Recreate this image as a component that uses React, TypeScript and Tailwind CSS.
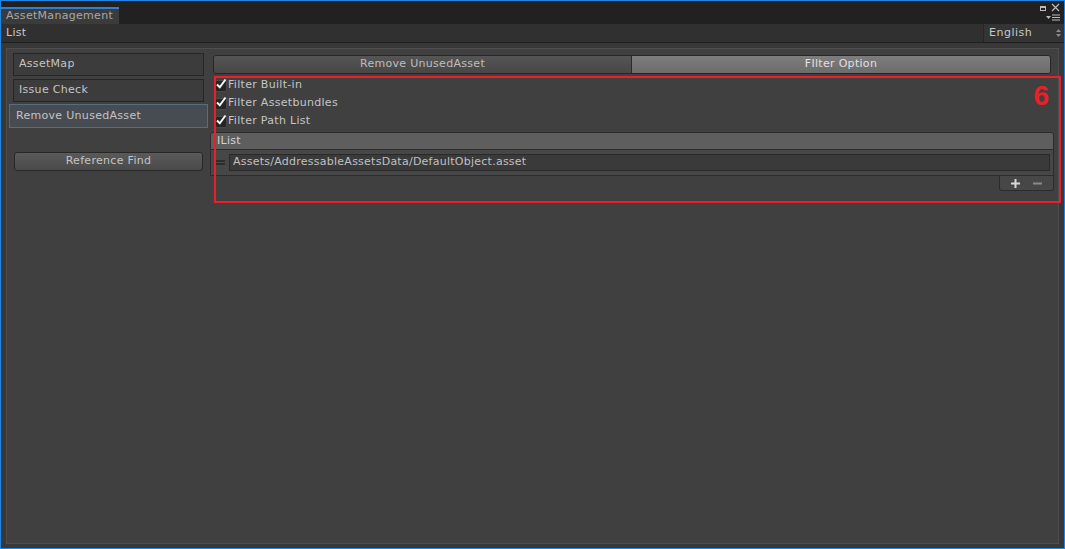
import React from 'react';

const font = { fontFamily: '"DejaVu Sans", Verdana, sans-serif' };

const Check = () => (
    <span className="relative w-[12px] h-[12px] mt-[2px] rounded-[2px] bg-[#252525] border border-[#4a4a4a] shrink-0">
        <svg width="12" height="12" viewBox="0 0 12 12" className="absolute left-[-1px] top-[-3px]">
            <path d="M2 6.5 L4.8 9.3 L10.5 1.5" stroke="#f4f4f4" strokeWidth="2" fill="none" />
        </svg>
    </span>
);

const ToggleRow: React.FC<{ label: string }> = ({ label }) => (
    <div className="flex items-center h-[18px] gap-[1px] pl-[5px] text-[11px] text-[#c4c4c4] tracking-[0.3px]">
        <Check />
        <span>{label}</span>
    </div>
);

const SideButton: React.FC<{ label: string; active?: boolean }> = ({ label, active }) =>
    active ? (
        <div className="h-[24px] -mt-[1px] mx-[2px] flex items-center px-[6px] bg-[#474b52] border border-[#5a6a80] text-[11px] text-[#c4c4c4] tracking-[0.3px]">
            {label}
        </div>
    ) : (
        <div className="h-[23px] mx-[6px] flex items-center px-[5px] bg-[#3c3c3c] border border-[#262626] text-[11px] text-[#c4c4c4] tracking-[0.3px]">
            {label}
        </div>
    );

export default function App() {
    return (
        <div className="w-[1065px] h-[549px] border border-[#1b87e6] bg-[#383838] flex flex-col overflow-hidden" style={font}>
            {/* tab strip */}
            <div className="h-[23px] bg-[#212121] flex items-end relative shrink-0">
                <div className="w-[118px] h-[17px] bg-[#3b3b3b] border-t-2 border-[#2f7fd4] flex items-center pl-[5px] text-[11px] text-[#a8a8a8] tracking-[0.3px]">
                    AssetManagement
                </div>
                <div className="absolute right-[4px] top-[2px] flex items-start gap-[5px]">
                    <span className="mt-[3px] w-[6px] h-[5px] border border-[#bbb] border-t-2" />
                    <svg width="9" height="9" viewBox="0 0 9 9">
                        <path d="M1 1 L8 8 M8 1 L1 8" stroke="#bbb" strokeWidth="1.2" />
                    </svg>
                </div>
                <div className="absolute right-[4px] top-[13px] flex items-center gap-[1px]">
                    <svg width="5" height="4" viewBox="0 0 5 4"><path d="M0 0 L5 0 L2.5 3 Z" fill="#bbb" /></svg>
                    <svg width="8" height="7" viewBox="0 0 8 7"><path d="M0 1 H8 M0 3.5 H8 M0 6 H8" stroke="#bbb" strokeWidth="1.2" /></svg>
                </div>
            </div>

            {/* toolbar */}
            <div className="h-[19px] bg-[#303030] border-b border-[#1e1e1e] flex items-center shrink-0">
                <span className="pl-[5px] text-[11px] text-[#c8c8c8] tracking-[0.3px] flex-1">List</span>
                <div className="w-[81px] h-full border-l border-[#262626] bg-[#343434] flex items-center justify-between pl-[5px] pr-[3px] text-[11px] text-[#c8c8c8] tracking-[0.5px]">
                    English
                    <svg width="5" height="8" viewBox="0 0 5 8"><path d="M0 3 L2.5 0 L5 3 Z M0 5 L2.5 8 L5 5 Z" fill="#8a8a8a" /></svg>
                </div>
            </div>

            {/* main */}
            <div className="flex-1 px-[5px] pt-[5px] pb-[4px] flex">
                <div className="flex-1 border border-[#4e4e4e] bg-[#404040] flex">
                    {/* left column */}
                    <div className="w-[203px] pt-[4px] flex flex-col gap-[3px]">
                        <SideButton label="AssetMap" />
                        <SideButton label="Issue Check" />
                        <SideButton label="Remove UnusedAsset" active />
                        <div className="mt-[21px] mx-[7px] h-[19px] rounded-[3px] bg-gradient-to-b from-[#5a5a5a] to-[#4a4a4a] border border-[#272727] flex items-center justify-center text-[11px] text-[#c4c4c4] tracking-[0.3px]">
                            Reference Find
                        </div>
                    </div>

                    {/* right column */}
                    <div className="relative flex-1 pt-[6px] flex flex-col">
                        <div className="ml-[3px] mr-[7px] h-[19px] flex rounded-[3px] border border-[#262626] overflow-hidden text-[11px] tracking-[0.3px]">
                            <div className="w-[418px] bg-gradient-to-b from-[#555] to-[#474747] flex items-center justify-center text-[#bdbdbd] border-r border-[#2a2a2a]">
                                Remove UnusedAsset
                            </div>
                            <div className="flex-1 bg-gradient-to-b from-[#7d7d7d] to-[#6c6c6c] flex items-center justify-center text-[#e0e0e0]">
                                FIlter Option
                            </div>
                        </div>

                        <div className="mt-[2px] flex flex-col">
                            <ToggleRow label="Filter Built-in" />
                            <ToggleRow label="Filter Assetbundles" />
                            <ToggleRow label="Filter Path List" />
                        </div>
                        <div className="mt-[2px] mr-[4px] rounded-t-[3px] border border-[#2c2c2c] bg-[#5e5e5e] h-[18px] flex items-center pl-[6px] text-[11px] text-[#d2d2d2] tracking-[0.3px]">
                            IList
                        </div>
                        <div className="mr-[4px] border border-t-0 border-[#2c2c2c] bg-[#474747] h-[26px] flex items-center pl-[5px] pr-[3px] gap-[4px]">
                            <svg width="9" height="5" viewBox="0 0 9 5"><path d="M0 1 H9 M0 4 H9" stroke="#151515" strokeWidth="1.2" /></svg>
                            <div className="flex-1 h-[17px] bg-[#3a3a3a] border border-[#2a2a2a] flex items-center pl-[3px] text-[11px] text-[#c0c0c0] tracking-[0.25px]">
                                Assets/AddressableAssetsData/DefaultObject.asset
                            </div>
                        </div>
                        <div className="flex justify-end mr-[4px]">
                            <div className="w-[55px] h-[15px] bg-[#474747] border border-t-0 border-[#2c2c2c] rounded-b-[3px] flex items-center justify-around px-[4px]">
                                <svg width="9" height="9" viewBox="0 0 9 9"><path d="M4.5 0 V9 M0 4.5 H9" stroke="#d8d8d8" strokeWidth="2" /></svg>
                                <svg width="9" height="9" viewBox="0 0 9 9"><path d="M0 4.5 H9" stroke="#8a8a8a" strokeWidth="2" /></svg>
                            </div>
                        </div>

                        {/* annotation overlay */}
                        <div className="absolute left-[4px] top-[27px] w-[847px] h-[127px] border-2 border-[#e8202a] pointer-events-none">
                            <span className="absolute right-[10px] top-[4px] text-[28px] font-bold leading-none text-[#e8202a]" style={{ fontFamily: '"Liberation Sans", Arial, sans-serif' }}>
                                6
                            </span>
                        </div>
                    </div>
                </div>
            </div>
        </div>
    );
}
